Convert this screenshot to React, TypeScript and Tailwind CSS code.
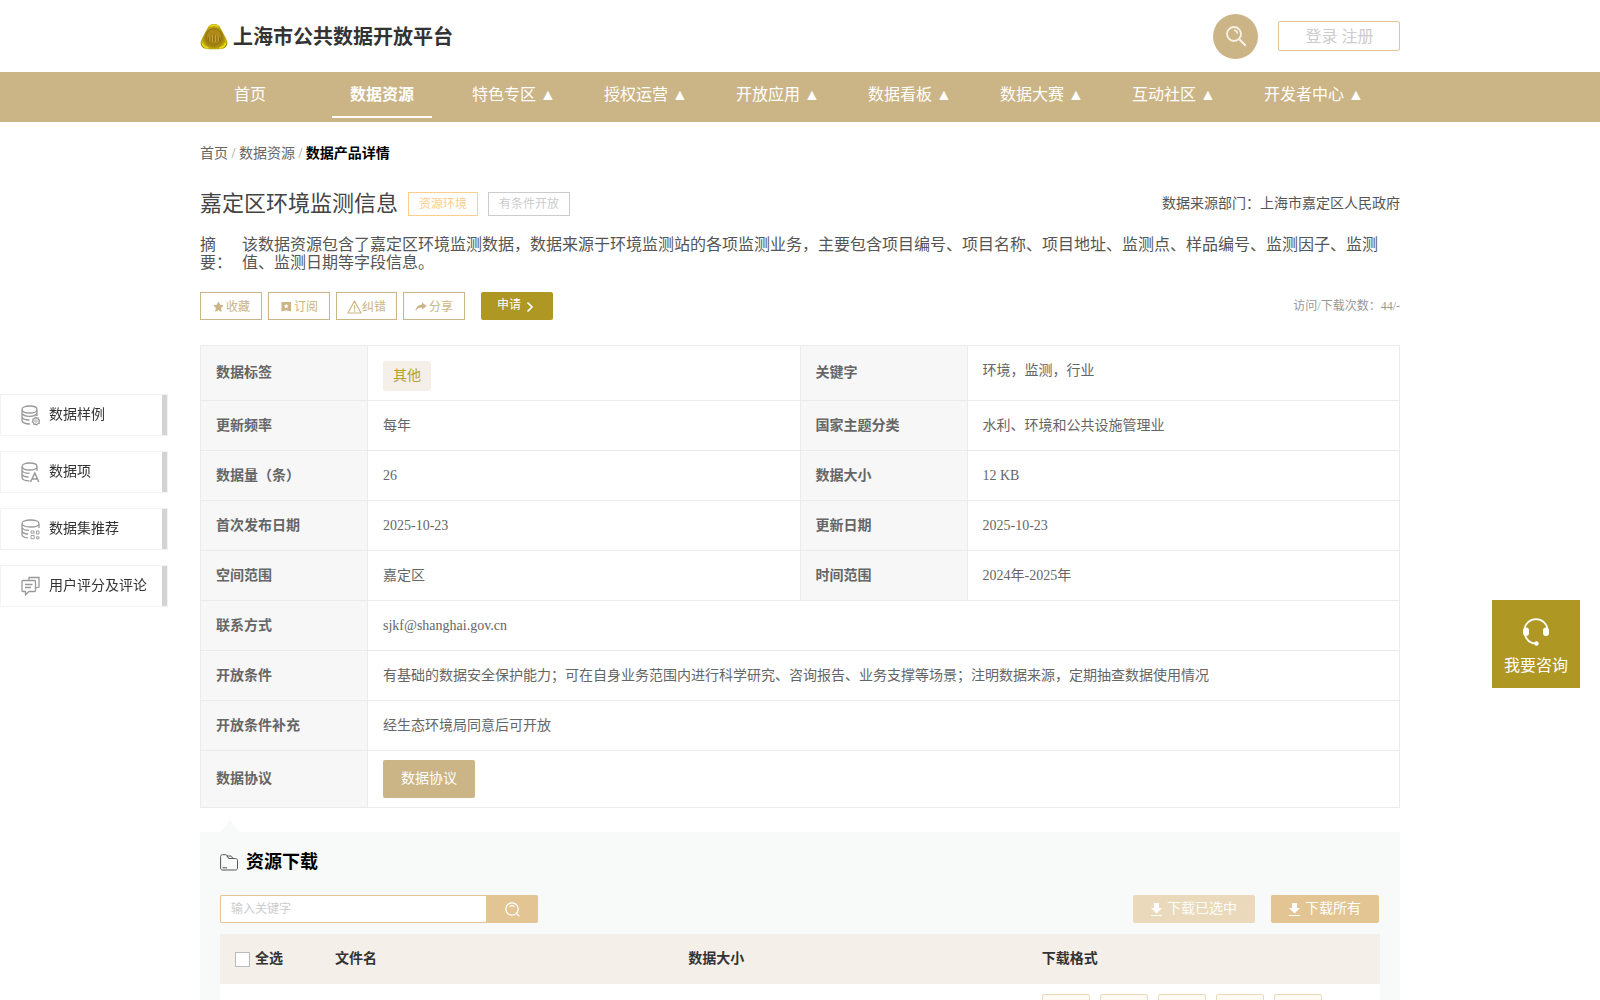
import React from 'react';

interface NavItem {
  label: string;
  hasMenu?: boolean;
  active?: boolean;
}

const NAV_ITEMS: NavItem[] = [
  { label: '首页' },
  { label: '数据资源', active: true },
  { label: '特色专区', hasMenu: true },
  { label: '授权运营', hasMenu: true },
  { label: '开放应用', hasMenu: true },
  { label: '数据看板', hasMenu: true },
  { label: '数据大赛', hasMenu: true },
  { label: '互动社区', hasMenu: true },
  { label: '开发者中心', hasMenu: true },
];

// two label/value pairs per row
const PAIR_ROWS: string[][] = [
  ['更新频率', '每年', '国家主题分类', '水利、环境和公共设施管理业'],
  ['数据量（条）', '26', '数据大小', '12 KB'],
  ['首次发布日期', '2025-10-23', '更新日期', '2025-10-23'],
  ['空间范围', '嘉定区', '时间范围', '2024年-2025年'],
];

// one label, value spans the rest
const WIDE_ROWS: string[][] = [
  ['联系方式', 'sjkf@shanghai.gov.cn'],
  ['开放条件', '有基础的数据安全保护能力；可在自身业务范围内进行科学研究、咨询报告、业务支撑等场景；注明数据来源，定期抽查数据使用情况'],
  ['开放条件补充', '经生态环境局同意后可开放'],
];

const FORMATS = ['rdf', 'xml', 'csv', 'json', 'xlsx'];

const Logo = () => (
  <svg className="h-[27px] w-7" viewBox="0 0 28 27" aria-hidden="true">
    <defs>
      <radialGradient id="logoGold" cx="0.5" cy="0.55" r="0.6">
        <stop offset="0" stopColor="#b8920f" />
        <stop offset="0.55" stopColor="#a08410" />
        <stop offset="0.8" stopColor="#c9b80c" />
        <stop offset="1" stopColor="#7d6410" />
      </radialGradient>
    </defs>
    <path d="M14 1c3 0 5 1.500 6.500 4l6.300 12c1.500 4.500-.3 7.500-4.300 8.700-5 .7-12 .7-17 0C1.500 24.500-.300 21.500 1.200 17l6.300-12C9 2.500 11 1 14 1z" fill="url(#logoGold)" />
    <path d="M10 3.500c2-2 6-2 8 0M2.500 20c.5 3 3 4.500 6 4.700M25.500 20c-.5 3-3 4.500-6 4.700" fill="none" stroke="#e8dc10" strokeWidth="1.600" />
    <circle cx="14" cy="13.500" r="7.800" fill="#b08a18" stroke="#8a6f12" strokeWidth="0.800" />
    <path d="M8.500 18v-4M11 19v-6M14 19.500v-8M17 19v-6M19.500 18v-4" stroke="#866a10" strokeWidth="0.900" />
    <path d="M9.800 18v-5M12.500 19v-7M15.500 19v-7M18.200 18v-5" stroke="#cfae35" strokeWidth="0.800" />
  </svg>
);

const SearchIcon = () => (
  <svg className="h-[21px] w-[21px]" viewBox="0 0 21 21" fill="none" stroke="#f7f1e6" aria-hidden="true">
    <circle cx="8" cy="8" r="7" strokeWidth="1.800" />
    <path d="M8 4.200A3.800 3.800 0 0 1 11.600 7.600" strokeWidth="1.400" />
    <path d="M13.200 13.200l6.600 6.600" strokeWidth="2" />
  </svg>
);

const SmallSearchIcon = () => (
  <svg className="h-[15px] w-[15px]" viewBox="0 0 15 15" fill="none" stroke="#fff" strokeWidth="1.300" aria-hidden="true">
    <circle cx="7" cy="7" r="6.200" />
    <path d="M4.500 4.500c1.300-1 3.300-1.200 5 0M11.400 11.400l3 3" />
  </svg>
);

const StarIcon = () => (
  <svg className="h-3 w-3" viewBox="0 0 12 12" fill="#cbb486" aria-hidden="true">
    <path d="M6.500 1.300l1.300 2.900 3.200.4-2.400 2.300.6 3.300L6.500 8.700l-2.700 1.500.6-3.300L2 4.600l3.200-.4z" stroke="#cbb486" strokeLinejoin="round" />
  </svg>
);

const BookmarkIcon = () => (
  <svg className="h-3 w-3" viewBox="0 0 12 12" aria-hidden="true">
    <path d="M1.500 1H11v9.500L6.200 9.300 1.500 10.500z" fill="#cbb486" />
    <path d="M6.200 2.800l.8 1.500 1.600.2-1.200 1.200.3 1.600-1.500-.8-1.500.8.3-1.600-1.200-1.200 1.600-.2z" fill="#fff" />
  </svg>
);

const WarnIcon = () => (
  <svg className="h-[14px] w-[15px]" viewBox="0 0 15 14" fill="none" stroke="#cbb486" strokeWidth="1.200" strokeLinejoin="round" aria-hidden="true">
    <path d="M7.500 1L14 13H1zM7.500 5v4.500M7.500 10.500v1.200" />
  </svg>
);

const ShareIcon = () => (
  <svg className="h-3 w-3" viewBox="0 0 12 12" fill="#cbb486" aria-hidden="true">
    <path d="M7 1.500L11.700 5 7 8.600V6.500C4.200 6.500 2 7.500.500 10.300.800 6.400 3 3.800 7 3.500z" />
  </svg>
);

const DownloadIcon = () => (
  <svg className="h-[14px] w-[11px]" viewBox="0 0 11 14" fill="#fff" aria-hidden="true">
    <path d="M3 1h5v5h3L5.500 11.500 0 6h3zM0 13h11v1H0z" />
  </svg>
);

const FolderIcon = () => (
  <svg className="h-[17px] w-[18px]" viewBox="0 0 18 17" fill="none" stroke="#555" strokeLinejoin="round" aria-hidden="true">
    <path d="M2.500.700h3.200c.6 0 1 .3 1.300.8l1.700 3h6.800c1.100 0 2 .8 2 1.800v7.900c0 1-.8 1.800-1.800 1.800H2.400c-1 0-1.800-.8-1.800-1.800V2.500c0-1 .8-1.800 1.900-1.800z" />
    <path d="M6.500 2h4.200c.7 0 1.200.5 1.500 1.200l.4 1.200M2.500 13.800h4.500" />
  </svg>
);

const HeadsetIcon = () => (
  <svg className="h-[28px] w-7" viewBox="0 0 28 28" fill="none" stroke="#fff" strokeWidth="1.700" aria-hidden="true">
    <path d="M2.500 11.500C3 5.500 8 1.200 14 1.200s11 4.300 11.500 10.300M2.700 16C4 22 8 25.200 14 25.700" />
    <rect x="1" y="9.500" width="6" height="8.500" rx="3" fill="#fff" stroke="none" />
    <rect x="21" y="9.500" width="6" height="8.500" rx="3" fill="#fff" stroke="none" />
    <circle cx="14.500" cy="25.500" r="2.200" fill="#fff" stroke="none" />
  </svg>
);

const DATABASE_BODY = 'M1 4.500C1 2.500 4 1 8.500 1S16 2.500 16 4.500 13 8 8.500 8 1 6.500 1 4.500zM1 4.500v11c0 1.800 3 3.200 7.500 3.400M1 8.300c.5 1.800 3.500 3 7.500 3M1 12c.5 1.800 3 3 6.500 3M16 4.500V9';

interface SideItem {
  label: string;
  icon: React.ReactNode;
}

const SIDE_ITEMS: SideItem[] = [
  {
    label: '数据样例',
    icon: (
      <>
        <path d="M1 4.500C1 2.500 4 1 8.500 1S16 2.500 16 4.500 13 8 8.500 8 1 6.500 1 4.500zM1 4.500v11c0 1.800 3 3.500 8 3.500M1 8c.5 2 3.500 3.300 7.500 3.300S15.500 10 16 8M1 12c.5 1.800 3 3 7.500 3M16 4.500V11" />
        <path d="M14.500 12.300l1 .8 1.500-.1.500 1.500 1.200.9-.7 1.400.2 1.400-1.500.5-.9 1.100-1.300-.7-1.500.2-.5-1.500-1.100-.9.7-1.400-.1-1.400 1.400-.5z" />
        <circle cx="15" cy="16" r="1.200" strokeWidth="0.800" />
      </>
    ),
  },
  {
    label: '数据项',
    icon: (
      <>
        <path d={DATABASE_BODY} />
        <path d="M9.500 20L13.800 11l4 9M11.500 17h5" strokeWidth="1.500" />
      </>
    ),
  },
  {
    label: '数据集推荐',
    icon: (
      <>
        <path d="M1 4.500C1 2.500 4 1 9.500 1S18 2.500 18 4.500 15 8 9.500 8 1 6.500 1 4.500zM1 4.500v11c0 1.800 2 3 6 3.400M1 8.300c.5 1.800 3 3 7 3M1 12c.5 1.800 2.500 2.800 6 3M18 4.500V9" />
        <path d="M10 12h3.200v2.200H10zM15.500 12H18v3h-2.500zM10 16.500h3.200v3.200H10zM15.500 17.800H18v2h-2.500z" strokeWidth="0.900" />
      </>
    ),
  },
  {
    label: '用户评分及评论',
    icon: (
      <path d="M5.500 4.500h8c.6 0 1 .4 1 1v9c0 .6-.4 1-1 1H8l-3.500 3.300v-3.300H2c-.6 0-1-.4-1-1v-9c0-.6.4-1 1-1h3.500M8 4.500V1.500h10v9.500l-3.500 1M4 8.500h7.500M4 11.500h6" />
    ),
  },
];

const ACTIONS = [
  { label: '收藏', icon: <StarIcon />, layout: 'w-[62px] gap-[2px]' },
  { label: '订阅', icon: <BookmarkIcon />, layout: 'w-[62px] gap-[2px]' },
  { label: '纠错', icon: <WarnIcon />, layout: 'w-[61px]' },
  { label: '分享', icon: <ShareIcon />, layout: 'w-[62px] gap-[2px]' },
];

const LABEL_CELL = 'border border-[#ebebeb] bg-[#f7f7f7] px-[15px] text-left font-bold';
const VALUE_CELL = 'border border-[#ebebeb] px-[15px]';

const Header: React.FC = () => (
  <header className="mx-auto flex h-[72px] max-w-[1200px] items-center justify-between">
    <a href="#" className="flex items-center gap-[5px] text-[20px] leading-6 font-bold text-[#333]">
      <Logo />
      <span className="pt-[2px]">上海市公共数据开放平台</span>
    </a>
    <div className="flex items-center gap-5">
      <button type="button" aria-label="搜索" className="flex h-[45px] w-[45px] items-center justify-center rounded-full bg-[#cbb486] pl-px">
        <SearchIcon />
      </button>
      <div className="flex h-[30px] w-[122px] items-center justify-center gap-1 rounded-[2px] border border-[#e2c592] pt-px pl-px leading-6 text-[#ccc]">
        <a href="#">登录</a>
        <a href="#">注册</a>
      </div>
    </div>
  </header>
);

const MainNav: React.FC = () => (
  <nav className="bg-[#cbb486]">
    <ul className="mx-auto flex h-[50px] max-w-[1200px] gap-8 whitespace-nowrap">
      {NAV_ITEMS.map((item) => (
        <li key={item.label}>
          <a
            href="#"
            className={`block h-[46px] min-w-[100px] border-b-2 px-2 text-center leading-[46px] text-white ${item.active ? 'border-white font-bold' : 'border-transparent'}`}>
            {item.label}{item.hasMenu && ' ▲'}
          </a>
        </li>
      ))}
    </ul>
  </nav>
);

const Summary: React.FC = () => (
  <section>
    <div className="mt-6 flex h-8 items-center gap-[10px]">
      <h1 className="text-[22px] leading-8 text-[#444]">嘉定区环境监测信息</h1>
      <span className="h-6 border border-[#fbce8d] px-[10px] text-xs leading-[23px] text-[#fbce8d]">资源环境</span>
      <span className="h-6 border border-[#ccc] px-[10px] text-xs leading-[23px] text-[#ccc]">有条件开放</span>
      <span className="ml-auto text-sm text-[#555]">数据来源部门：上海市嘉定区人民政府</span>
    </div>
    <div className="mt-4 flex leading-[18px] text-[#555]">
      <div className="w-[42px] shrink-0">摘<br />要：</div>
      <p>该数据资源包含了嘉定区环境监测数据，数据来源于环境监测站的各项监测业务，主要包含项目编号、项目名称、项目地址、监测点、样品编号、监测因子、监测值、监测日期等字段信息。</p>
    </div>
    <div className="mt-5 flex items-center gap-[6px] text-xs">
      {ACTIONS.map((action) => (
        <button
          type="button"
          key={action.label}
          className={`flex h-7 items-center justify-center border border-[#cbb486] pt-px text-[#cbb486] ${action.layout}`}>
          {action.icon}
          {action.label}
        </button>
      ))}
      <button type="button" className="ml-[10px] flex h-7 w-[72px] items-center gap-[5px] rounded-[2px] bg-[#ae9722] pb-[3px] pl-4 text-white">
        申请
        <svg className="mt-1 h-3 w-2" viewBox="0 0 8 12" fill="none" stroke="#fff" strokeWidth="1.700" aria-hidden="true">
          <path d="M1.500 1.500L6 6l-4.500 4.500" />
        </svg>
      </button>
      <span className="ml-auto text-[#999]">访问/下载次数：44/-</span>
    </div>
  </section>
);

const DetailTable: React.FC = () => (
  <table className="mt-[25px] w-full table-fixed border-collapse text-sm text-[#666]">
    <colgroup>
      <col className="w-[167px]" />
      <col />
      <col className="w-[167px]" />
      <col />
    </colgroup>
    <tbody>
      <tr className="h-[55px]">
        <th scope="row" className={LABEL_CELL}>数据标签</th>
        <td className={`${VALUE_CELL} pt-[5px]`}>
          <span className="inline-block rounded-[3px] bg-[#f4efe8] px-[10px] leading-[30px] text-[#b5a02c]">其他</span>
        </td>
        <th scope="row" className={LABEL_CELL}>关键字</th>
        <td className={`${VALUE_CELL} pb-1`}>环境，监测，行业</td>
      </tr>
      {PAIR_ROWS.map((row) => (
        <tr key={row[0]} className="h-[50px]">
          <th scope="row" className={LABEL_CELL}>{row[0]}</th>
          <td className={VALUE_CELL}>{row[1]}</td>
          <th scope="row" className={LABEL_CELL}>{row[2]}</th>
          <td className={VALUE_CELL}>{row[3]}</td>
        </tr>
      ))}
      {WIDE_ROWS.map((row) => (
        <tr key={row[0]} className="h-[50px]">
          <th scope="row" className={LABEL_CELL}>{row[0]}</th>
          <td colSpan={3} className={VALUE_CELL}>{row[1]}</td>
        </tr>
      ))}
      <tr className="h-[57px]">
        <th scope="row" className={LABEL_CELL}>数据协议</th>
        <td colSpan={3} className={VALUE_CELL}>
          <button type="button" className="block h-[38px] rounded-[2px] bg-[#cbb486] px-[18px] text-white">数据协议</button>
        </td>
      </tr>
    </tbody>
  </table>
);

const Downloads: React.FC = () => (
  <section className="relative mt-6 bg-[#f8faf9] px-5 pt-4">
    {/* pointer on the top edge */}
    <div className="absolute -top-3 left-5 border-x-10 border-b-12 border-x-transparent border-b-[#f8faf9]" />
    <h2 className="flex items-center gap-2 text-[18px] leading-7 font-bold text-black">
      <FolderIcon />
      资源下载
    </h2>
    <div className="mt-[19px] flex items-center justify-between">
      <form className="flex h-7 text-xs">
        <input
          type="text"
          aria-label="输入关键字"
          placeholder="输入关键字"
          className="w-[266px] rounded-l-[2px] border border-r-0 border-[#e2c592] bg-white px-[10px] outline-none placeholder:text-[#ccc]" />
        <button type="button" aria-label="查询" className="flex w-[52px] items-center justify-center rounded-r-[2px] bg-[#e2c592]">
          <SmallSearchIcon />
        </button>
      </form>
      <div className="flex gap-4 pr-px text-sm text-white">
        <button type="button" disabled className="flex h-7 items-center gap-[5px] rounded-[2px] bg-[#e2c592] px-[18px] opacity-60">
          <DownloadIcon />
          下载已选中
        </button>
        <button type="button" className="flex h-7 items-center gap-[5px] rounded-[2px] bg-[#e2c592] px-[18px]">
          <DownloadIcon />
          下载所有
        </button>
      </div>
    </div>
    <table className="mt-[11px] w-full table-fixed bg-white text-left text-sm text-[#333]">
      <thead>
        <tr className="h-[50px] bg-[#f4efe8]">
          <th className="w-[100px] pl-[15px]">
            <label className="flex items-center gap-[5px]">
              <input type="checkbox" className="h-[15px] w-[15px] appearance-none border border-[#bbb] bg-white" />
              全选
            </label>
          </th>
          <th className="px-[15px]">文件名</th>
          <th className="px-[15px]">数据大小</th>
          <th className="px-[15px]">下载格式</th>
        </tr>
      </thead>
      <tbody>
        <tr>
          <td colSpan={3} />
          <td className="px-[15px] pt-[10px]">
            <div className="flex gap-[10px]">
              {FORMATS.map((format) => (
                <button type="button" key={format} aria-label={format} className="h-[30px] w-12 rounded-[2px] border border-[#ebd9b9] bg-[#fefaf4]" />
              ))}
            </div>
          </td>
        </tr>
      </tbody>
    </table>
  </section>
);

const SideMenu: React.FC = () => (
  <aside className="fixed top-[394px] left-0 flex w-[168px] flex-col gap-[15px]">
    {SIDE_ITEMS.map((item) => (
      <a
        key={item.label}
        href="#"
        className="flex h-[42px] items-center justify-between border border-[#f2f2f2] bg-white pl-5 text-sm whitespace-nowrap text-[#333]">
        <span className="flex items-center gap-[9px]">
          <svg className="h-[21px] w-[19px]" viewBox="0 0 19 21" fill="none" stroke="#999" strokeWidth="1.300" aria-hidden="true">
            {item.icon}
          </svg>
          {item.label}
        </span>
        <span className="h-full w-[5px] bg-[#d3d3d3]" />
      </a>
    ))}
  </aside>
);

const App: React.FC = () => {
  return (
    <div className="h-screen overflow-hidden bg-white font-['Liberation_Serif','Noto_Sans_CJK_SC',serif] text-base">
      <Header />
      <MainNav />
      <main className="mx-auto max-w-[1200px]">
        <div className="pt-[22px] text-sm leading-5 text-[#666]">
          <a href="#">首页</a> <span className="text-[#999]">/</span> <a href="#">数据资源</a> <span className="text-[#999]">/</span>{' '}
          <strong className="text-black">数据产品详情</strong>
        </div>
        <Summary />
        <DetailTable />
        <Downloads />
      </main>
      <SideMenu />
      <button type="button" className="fixed top-[600px] right-5 flex h-[88px] w-[88px] flex-col items-center gap-2 bg-[#ae9722] pt-[18px] leading-6 text-white">
        <HeadsetIcon />
        我要咨询
      </button>
    </div>
  );
};

export default App;
